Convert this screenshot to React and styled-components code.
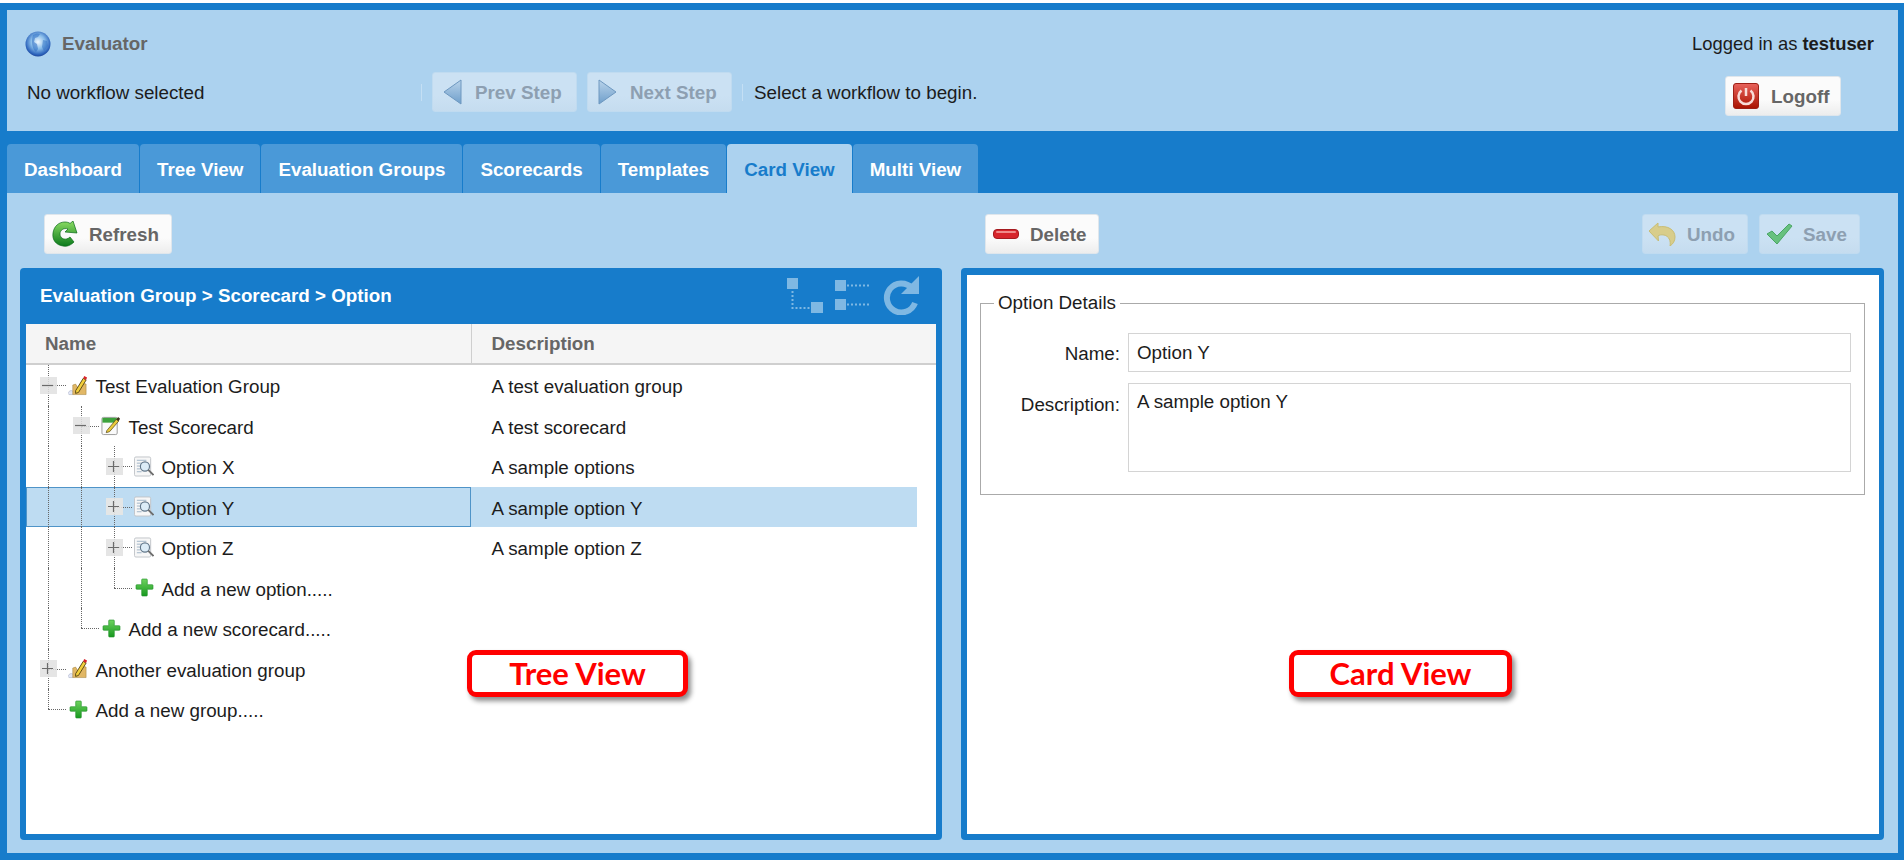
import React from "react";
import styled, { createGlobalStyle } from "styled-components";

const BLUE = "#177ccb";
const LIGHT = "#acd2ef";
const FONT = '"Liberation Sans", Arial, sans-serif';
const SIZE = "18.8px";

const GlobalStyle = createGlobalStyle`
  html, body { margin: 0; padding: 0; background: #fff; }
  body { font-family: ${FONT}; font-size: ${SIZE}; color: #1c1c1c; }
`;

// STYLED COMPONENTS
const Page = styled.div`
  box-sizing: border-box;
  height: 857px;
  margin-top: 3px;
  padding: 7px 6px 7px 7px;
  background: ${BLUE};
  display: flex;
  flex-direction: column;
  overflow: hidden;
`;
const Header = styled.header`
  height: 121px;
  flex-shrink: 0;
  background: ${LIGHT};
  display: flex;
  justify-content: space-between;
`;
const HeaderLeft = styled.div`
  padding: 21px 0 0 18px;
`;
const TitleRow = styled.div`
  display: flex;
  align-items: center;
  gap: 11px;
  height: 25px;
  font-weight: bold;
  color: #666;
`;
const WorkflowRow = styled.div`
  display: flex;
  align-items: center;
  height: 40px;
  margin-top: 16px;
`;
const WorkflowName = styled.span`
  width: 393px;
  padding: 2px 0 0 2px;
  box-sizing: border-box;
`;
const Sep = styled.span`
  width: 1px;
  height: 17px;
  background: #c4dff4;
  margin: ${(p) => p.$margin};
`;
const WorkflowHint = styled.span`
  padding-top: 2px;
`;
const StepGroup = styled.div`
  display: flex;
  gap: 10px;
`;
const HeaderRight = styled.div`
  padding: 24px 24px 0 0;
  display: flex;
  flex-direction: column;
  align-items: flex-end;
`;
const LoggedIn = styled.div`
  line-height: 20px;
  font-size: 18.4px;
  b { font-weight: bold; }
`;
const Button = styled.button`
  box-sizing: border-box;
  height: 40px;
  width: ${(p) => p.$w}px;
  flex-shrink: 0;
  padding: 2px 0 0 ${(p) => p.$pad || 7}px;
  display: flex;
  align-items: center;
  gap: ${(p) => p.$gap || 10}px;
  border: 1px solid ${(p) => (p.disabled ? "#c0dbf0" : "#dfe6ec")};
  border-radius: 3px;
  font: bold ${SIZE} ${FONT};
  color: ${(p) => (p.disabled ? "#8d9fb1" : "#666")};
  background: ${(p) =>
    p.disabled
      ? "linear-gradient(#cbe1f3 60%, #c5dcef)"
      : "linear-gradient(#fbfbfb 60%, #ededed)"};
  svg { margin-top: -2px; }
`;
const LogoffButton = styled(Button)`
  margin: 22px 33px 0 0;
`;
const Tabs = styled.nav`
  height: 62px;
  flex-shrink: 0;
  box-sizing: border-box;
  padding-top: 13px;
  display: flex;
  gap: 1px;
`;
const Tab = styled.div`
  height: 49px;
  padding: 2px 17px 0;
  box-sizing: border-box;
  display: flex;
  align-items: center;
  border-radius: 4px 4px 0 0;
  font-weight: bold;
  background: ${(p) => (p.$active ? LIGHT : "#4a99d8")};
  color: ${(p) => (p.$active ? BLUE : "#fff")};
`;
const Content = styled.main`
  flex: 1;
  min-height: 0;
  background: ${LIGHT};
  padding: 21px 14px 13px 13px;
  display: grid;
  grid-template-columns: 922px 923px;
  column-gap: 19px;
`;
const Column = styled.section`
  display: flex;
  flex-direction: column;
  gap: 14px;
  min-height: 0;
`;
const Toolbar = styled.div`
  height: 40px;
  flex-shrink: 0;
  padding: 0 24px;
  display: flex;
  justify-content: space-between;
`;
const ToolGroup = styled.div`
  display: flex;
  gap: 11px;
`;
const Panel = styled.div`
  flex: 1;
  min-height: 0;
  position: relative;
  display: flex;
  flex-direction: column;
  box-sizing: border-box;
  background: ${BLUE};
  border-radius: 4px;
  padding: ${(p) => p.$pad};
`;
const PanelHead = styled.div`
  height: 56px;
  flex-shrink: 0;
  display: flex;
  align-items: center;
  justify-content: space-between;
  padding: 0 17px 0 14px;
  font-weight: bold;
  color: #fff;
`;
const HeadTools = styled.div`
  display: flex;
  align-items: center;
  gap: 12px;
  margin-top: -2px;
`;
const TreeBody = styled.div`
  flex: 1;
  min-height: 0;
  background: #fff;
`;
const ColumnHead = styled.div`
  box-sizing: border-box;
  height: 41px;
  display: grid;
  grid-template-columns: 445px 1fr;
  background: #f5f5f5;
  border-bottom: 2px solid #cfcfcf;
  font-weight: bold;
  color: #666;
`;
const HeadCell = styled.div`
  display: flex;
  align-items: center;
  padding-left: ${(p) => p.$pad}px;
  border-left: ${(p) => (p.$split ? "1px solid #cfcfcf" : "none")};
`;
const Row = styled.div`
  height: 40.5px;
  display: grid;
  grid-template-columns: 445px 446px;
`;
const NameCell = styled.div`
  display: flex;
  align-items: stretch;
  padding-left: 14px;
  background: ${(p) => (p.$selected ? "#bedcf2" : "transparent")};
  box-shadow: ${(p) => (p.$selected ? "inset 0 0 0 1px #4f94c8" : "none")};
`;
const DescCell = styled.div`
  display: flex;
  align-items: center;
  padding: 4px 0 0 20.5px;
  background: ${(p) => (p.$selected ? "#bedcf2" : "transparent")};
`;
const Guide = styled.span`
  box-sizing: border-box;
  width: 25px;
  margin-left: 8px;
  flex-shrink: 0;
  border-left: 1px dotted #666;
`;
const Connector = styled.span`
  position: relative;
  width: 26px;
  flex-shrink: 0;
  display: flex;
  align-items: center;
  &::before {
    content: "";
    position: absolute;
    left: 8px;
    top: 0;
    bottom: ${(p) => (p.$last ? "50%" : "0")};
    border-left: 1px dotted #666;
  }
  &::after {
    content: "";
    position: absolute;
    left: 8px;
    top: 50%;
    width: 18px;
    border-top: 1px dotted #666;
  }
`;
const Toggle = styled.span`
  width: 17px;
  height: 17px;
  z-index: 1;
  display: flex;
  background: ${(p) => (p.$selected ? "rgba(235, 232, 228, 0.85)" : "rgba(225, 225, 225, 0.85)")};
`;
const IconSlot = styled.span`
  width: 20px;
  margin-left: 2px;
  flex-shrink: 0;
  display: flex;
  align-items: center;
  justify-content: center;
`;
const Label = styled.span`
  margin-left: 7.5px;
  padding-top: 4px;
  display: flex;
  align-items: center;
  white-space: nowrap;
`;
const Card = styled.div`
  flex: 1;
  min-height: 0;
  background: #fff;
  padding: 18px 14px 0 13px;
`;
const Fieldset = styled.fieldset`
  margin: 0;
  padding: 20px 13px 22px 0;
  border: 1px solid #aaa;
  min-inline-size: 0;
  legend {
    margin-left: 13px;
    padding: 0 4px;
    line-height: 20px;
  }
`;
const FormGrid = styled.div`
  display: grid;
  grid-template-columns: 139px 1fr;
  column-gap: 8px;
  row-gap: 11px;
`;
const FieldLabel = styled.label`
  text-align: right;
  padding-top: ${(p) => p.$top}px;
`;
const Input = styled.input`
  box-sizing: border-box;
  width: 100%;
  height: 39px;
  padding: 0 8px;
  border: 1px solid #d4d4d4;
  outline: none;
  font: ${SIZE} ${FONT};
  color: #1c1c1c;
`;
const TextArea = styled.textarea`
  display: block;
  box-sizing: border-box;
  width: 100%;
  height: 89px;
  padding: 7px 8px;
  border: 1px solid #d4d4d4;
  outline: none;
  resize: none;
  font: ${SIZE} ${FONT};
  color: #1c1c1c;
`;
const Callout = styled.div`
  position: absolute;
  top: 382px;
  left: ${(p) => p.$left}px;
  box-sizing: border-box;
  width: ${(p) => p.$w}px;
  height: 47px;
  padding-bottom: 2px;
  display: flex;
  align-items: center;
  justify-content: center;
  background: #fff;
  border: 5px solid #f00;
  border-radius: 9px;
  box-shadow: 3px 4px 5px rgba(0, 0, 0, 0.45);
  font: bold 31px Lato, "Open Sans", sans-serif;
  color: #f00;
`;

// ICONS
const Globe = () => (
  <svg width="26" height="26" viewBox="0 0 26 26">
    <defs>
      <radialGradient id="globeFill" cx="0.5" cy="0.42" r="0.62">
        <stop offset="0" stopColor="#f0f8fe" />
        <stop offset="0.45" stopColor="#86bbe9" />
        <stop offset="0.8" stopColor="#2f66bd" />
        <stop offset="1" stopColor="#16398f" />
      </radialGradient>
    </defs>
    <ellipse cx="13" cy="13" rx="12.5" ry="12.5" fill="url(#globeFill)" />
    <path d="M8 4c2-1.500 5-2 7-1l-2 3-3 1-1 4 3 2 1 5-2 3c-4-3-5-11-3-17z" fill="#2f6fc4" opacity="0.55" />
    <path d="M18 9l4 1 1 5-4 5-2-4z" fill="#2f6fc4" opacity="0.5" />
  </svg>
);
const StepArrow = ({ dir }) => (
  <svg width="19" height="26" viewBox="0 0 19 26">
    <defs>
      <linearGradient id={"step" + dir} x1="0" y1="0" x2="0" y2="1">
        <stop offset="0" stopColor="#b9d3ea" />
        <stop offset="1" stopColor="#6f9fcb" />
      </linearGradient>
    </defs>
    <path
      d={dir === "prev" ? "M18 1v24L1 13z" : "M1 1v24l17-12z"}
      fill={"url(#step" + dir + ")"}
      stroke="#6e98c0"
    />
  </svg>
);
const RefreshIcon = () => (
  <svg width="26" height="26" viewBox="0 0 26 26">
    <defs>
      <linearGradient id="refreshFill" x1="0" y1="0" x2="0" y2="1">
        <stop offset="0" stopColor="#8bdc63" />
        <stop offset="1" stopColor="#0b7a1c" />
      </linearGradient>
    </defs>
    <path
      d="M13 1c2 0 4 .5 5 1.500L21 0l4 12-12-1 3-3c-4-1.500-8 1-8 5 0 5 6 7 10 3l4 5c-3 3-7 5-11 4C4 24 0 19 1 12 2 5 7 1 13 1z"
      fill="url(#refreshFill)"
      stroke="#0a6a18"
      strokeWidth="0.7"
    />
  </svg>
);
const DeleteIcon = () => (
  <svg width="26" height="10" viewBox="0 0 26 10">
    <rect x="0.5" y="0.5" width="25" height="9" rx="3.5" fill="#d7252c" stroke="#a51b20" />
    <rect x="3" y="2" width="20" height="2" rx="1" fill="#f08a8a" />
  </svg>
);
const PowerIcon = () => (
  <svg width="26" height="26" viewBox="0 0 26 26">
    <defs>
      <linearGradient id="powerFill" x1="0" y1="0" x2="0" y2="1">
        <stop offset="0" stopColor="#e8635c" />
        <stop offset="1" stopColor="#a91200" />
      </linearGradient>
    </defs>
    <rect x="0.500" y="0.500" width="25" height="25" rx="2.500" fill="url(#powerFill)" stroke="#9d2016" />
    <path d="M8.500 7.500a7.500 7.500 0 1 0 9 0" fill="none" stroke="#f8dcd8" strokeWidth="2.500" />
    <path d="M13 5v8" stroke="#f8dcd8" strokeWidth="2.500" />
  </svg>
);
const UndoIcon = () => (
  <svg width="28" height="24" viewBox="0 0 28 24">
    <path
      d="M1 9L10 1v4c10-2 17 3 17 10 0 4-2 7-5 9 1-5-1-10-6-11-3-.5-5 0-6 1l.5 5z"
      fill="#d8cd8b"
      stroke="#c9bd74"
    />
  </svg>
);
const CheckIcon = () => (
  <svg width="27" height="22" viewBox="0 0 27 22">
    <path d="M1 11l5-3 5 5L23 1l3 2-15 18z" fill="#67c17e" stroke="#4aa564" />
  </svg>
);
const ExpandAllIcon = () => (
  <svg width="36" height="35" viewBox="0 0 36 35" fill="#7fb8e3">
    <rect x="0" y="0" width="11" height="11" />
    <rect x="24" y="24" width="12" height="11" />
    <path d="M5.500 13v17h18" fill="none" stroke="#7fb8e3" strokeWidth="2" strokeDasharray="2 2" />
  </svg>
);
const CollapseAllIcon = () => (
  <svg width="36" height="30" viewBox="0 0 36 30" fill="#7fb8e3">
    <rect x="0" y="0" width="11" height="11" />
    <rect x="0" y="19" width="11" height="11" />
    <path d="M12 5.500h24M12 24.500h24" fill="none" stroke="#7fb8e3" strokeWidth="2" strokeDasharray="2 2" />
  </svg>
);
const ReloadIcon = () => (
  <svg width="36" height="39" viewBox="0 0 36 39">
    <path d="M29 12a14.500 14.500 0 1 0 3 15" fill="none" stroke="#7fb8e3" strokeWidth="6" />
    <path d="M36 0v18H18z" fill="#7fb8e3" />
  </svg>
);
const ToggleGlyph = ({ open }) => (
  <svg width="17" height="17" viewBox="0 0 17 17">
    <path d={open ? "M2 8.500h11" : "M2 8.500h11M7.500 3v11"} stroke="#6b6b6b" strokeWidth="1.200" />
  </svg>
);
const GroupIcon = () => (
  <svg width="21" height="21" viewBox="0 0 21 21">
    <path d="M0 19c1-4 5-4 6-1l-1 2H1z" fill="#e2e6f4" stroke="#a9afc8" strokeWidth="0.6" />
    <path d="M5 10l3-1 3 5 4-6 4 1v11H5z" fill="#e1b765" stroke="#9c7a32" strokeWidth="0.5" />
    <path d="M8 16L16 3l3 1.800-8 13-3 1z" fill="#f2cf3b" stroke="#4a3a0c" strokeWidth="0.9" />
    <path d="M16 3l1-2.500 3 1.700-1 2.600z" fill="#d8232a" />
  </svg>
);
const ScorecardIcon = () => (
  <svg width="21" height="21" viewBox="0 0 21 21">
    <rect x="1" y="2" width="16" height="18" rx="1.500" fill="#fafafa" stroke="#9a9a9a" />
    <rect x="1.500" y="2.500" width="15" height="5" fill="#3ea23c" />
    <path d="M6 16L16 4l2.500 2L9 17l-3.500 1z" fill="#eacb3c" stroke="#4d3e10" strokeWidth="0.7" />
    <path d="M16 4l2-2.500 2 2L18.500 6z" fill="#3d3418" />
  </svg>
);
const OptionIcon = () => (
  <svg width="21" height="21" viewBox="0 0 21 21">
    <rect x="0.500" y="0.500" width="17" height="20" rx="1.500" fill="#f7f7f7" stroke="#c0c4c8" />
    <path d="M3 4h10M3 7h5M3 10h4M3 13h4M3 16h5" stroke="#9fb3c6" strokeWidth="1" />
    <circle cx="11.500" cy="10.500" r="4.800" fill="#dcecf7" stroke="#62778a" strokeWidth="1.200" />
    <path d="M15 14l5.500 5.500" stroke="#6d6d6d" strokeWidth="2" />
  </svg>
);
const AddIcon = () => (
  <svg width="19" height="19" viewBox="0 0 19 19">
    <defs>
      <linearGradient id="addFill" x1="0" y1="0" x2="0" y2="1">
        <stop offset="0" stopColor="#6fd35f" />
        <stop offset="1" stopColor="#17981f" />
      </linearGradient>
    </defs>
    <path
      d="M7.500 1h4a.8.8 0 0 1 .8.8v4.900h4.900a.8.8 0 0 1 .8.800v3a.8.8 0 0 1-.8.800h-4.900v5.900a.8.8 0 0 1-.8.800h-4a.8.8 0 0 1-.8-.8v-5.900H1.800a.8.8 0 0 1-.8-.8v-3a.8.8 0 0 1 .8-.8h4.900V1.800a.8.8 0 0 1 .8-.8z"
      fill="url(#addFill)"
      stroke="#1c8f25"
      strokeWidth="0.6"
    />
  </svg>
);

const TAB_NAMES = ["Dashboard", "Tree View", "Evaluation Groups", "Scorecards", "Templates", "Card View", "Multi View"];

const TREE = [
  { guides: 0, toggle: "open", icon: <GroupIcon />, name: "Test Evaluation Group", desc: "A test evaluation group" },
  { guides: 1, toggle: "open", icon: <ScorecardIcon />, name: "Test Scorecard", desc: "A test scorecard" },
  { guides: 2, toggle: "closed", icon: <OptionIcon />, name: "Option X", desc: "A sample options" },
  { guides: 2, toggle: "closed", icon: <OptionIcon />, name: "Option Y", desc: "A sample option Y", selected: true },
  { guides: 2, toggle: "closed", icon: <OptionIcon />, name: "Option Z", desc: "A sample option Z" },
  { guides: 2, last: true, icon: <AddIcon />, name: "Add a new option....." },
  { guides: 1, last: true, icon: <AddIcon />, name: "Add a new scorecard....." },
  { guides: 0, toggle: "closed", icon: <GroupIcon />, name: "Another evaluation group" },
  { guides: 0, last: true, icon: <AddIcon />, name: "Add a new group....." },
];

const App = () => {
  return (
    <Page>
      <GlobalStyle />
      <Header>
        <HeaderLeft>
          <TitleRow>
            <Globe />
            Evaluator
          </TitleRow>
          <WorkflowRow>
            <WorkflowName>No workflow selected</WorkflowName>
            <Sep $margin="0 10px 0 3px" />
            <StepGroup>
              <Button disabled $w={145} $pad={10} $gap={13}>
                <StepArrow dir="prev" />
                Prev Step
              </Button>
              <Button disabled $w={145} $pad={10} $gap={13}>
                <StepArrow dir="next" />
                Next Step
              </Button>
            </StepGroup>
            <Sep $margin="0 11px 0 10px" />
            <WorkflowHint>Select a workflow to begin.</WorkflowHint>
          </WorkflowRow>
        </HeaderLeft>
        <HeaderRight>
          <LoggedIn>
            Logged in as <b>testuser</b>
          </LoggedIn>
          <LogoffButton $w={116} $gap={12}>
            <PowerIcon />
            Logoff
          </LogoffButton>
        </HeaderRight>
      </Header>
      <Tabs>
        {TAB_NAMES.map((t) => (
          <Tab key={t} $active={t === "Card View"}>
            {t}
          </Tab>
        ))}
      </Tabs>
      <Content>
        <Column>
          <Toolbar>
            <Button $w={128} $gap={11}>
              <RefreshIcon />
              Refresh
            </Button>
          </Toolbar>
          <Panel $pad="0 6px 6px 6px">
            <PanelHead>
              Evaluation Group &gt; Scorecard &gt; Option
              <HeadTools>
                <ExpandAllIcon />
                <CollapseAllIcon />
                <ReloadIcon />
              </HeadTools>
            </PanelHead>
            <TreeBody>
              <ColumnHead>
                <HeadCell $pad={19}>Name</HeadCell>
                <HeadCell $pad={19.5} $split>Description</HeadCell>
              </ColumnHead>
              {TREE.map((r) => (
                <Row key={r.name}>
                  <NameCell $selected={r.selected}>
                    {Array.from({ length: r.guides }).map((_, i) => (
                      <Guide key={i} />
                    ))}
                    <Connector $last={r.last}>
                      {r.toggle && (
                        <Toggle $selected={r.selected}>
                          <ToggleGlyph open={r.toggle === "open"} />
                        </Toggle>
                      )}
                    </Connector>
                    <IconSlot>{r.icon}</IconSlot>
                    <Label>{r.name}</Label>
                  </NameCell>
                  <DescCell $selected={r.selected}>{r.desc}</DescCell>
                </Row>
              ))}
            </TreeBody>
            <Callout $left={447} $w={221}>Tree View</Callout>
          </Panel>
        </Column>
        <Column>
          <Toolbar>
            <Button $w={114} $gap={11}>
              <DeleteIcon />
              Delete
            </Button>
            <ToolGroup>
              <Button disabled $w={106} $pad={5} $gap={11}>
                <UndoIcon />
                Undo
              </Button>
              <Button disabled $w={101} $pad={6} $gap={10}>
                <CheckIcon />
                Save
              </Button>
            </ToolGroup>
          </Toolbar>
          <Panel $pad="7px 5px 6px 6px">
            <Card>
              <Fieldset>
                <legend>Option Details</legend>
                <FormGrid>
                  <FieldLabel $top={10}>Name:</FieldLabel>
                  <Input readOnly value="Option Y" />
                  <FieldLabel $top={11}>Description:</FieldLabel>
                  <TextArea readOnly value="A sample option Y" />
                </FormGrid>
              </Fieldset>
            </Card>
            <Callout $left={328} $w={223}>Card View</Callout>
          </Panel>
        </Column>
      </Content>
    </Page>
  );
};

export default App;
